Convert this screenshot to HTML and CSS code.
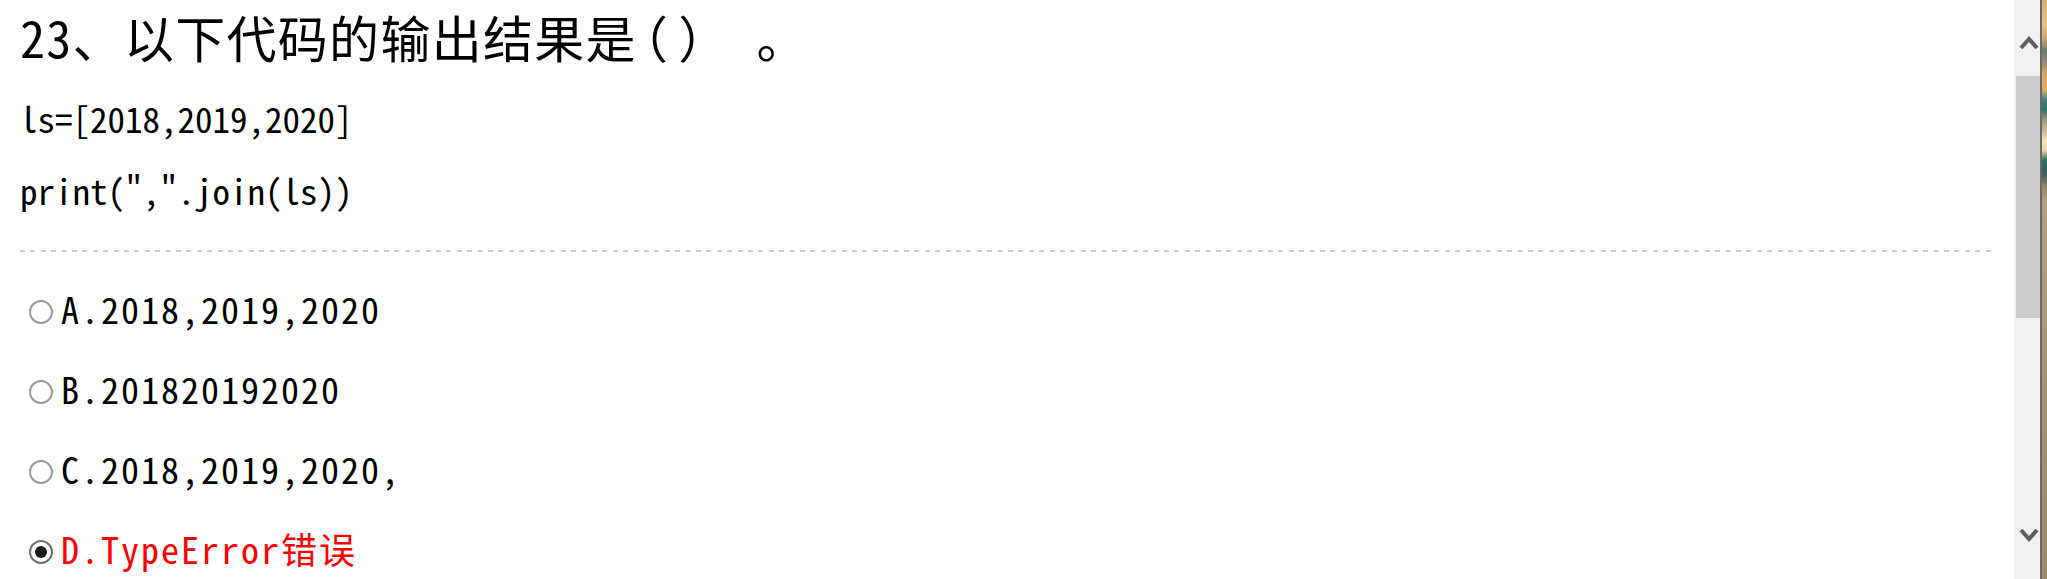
FILE: index.html
```html
<!DOCTYPE html>
<html lang="zh-CN">
<head>
<meta charset="utf-8">
<title>23、以下代码的输出结果是（）。</title>
<link rel="stylesheet" href="styles.css">
</head>
<body>
<div class="window">
  <main class="page">
    <h1 class="title">23、以下代码的输出结果是<span class="paren-open">（</span><span class="paren-close">）</span><span class="full-stop">。</span></h1>
    <div class="code">
      <p class="code-line">ls=[2018,2019,2020]</p>
      <p class="code-line">print(",".join(ls))</p>
    </div>
    <div class="sep"></div>
    <ul class="options">
      <li class="opt"><span class="radio"></span><span class="opt-text">A.2018,2019,2020</span></li>
      <li class="opt"><span class="radio"></span><span class="opt-text">B.201820192020</span></li>
      <li class="opt"><span class="radio"></span><span class="opt-text">C.2018,2019,2020,</span></li>
      <li class="opt opt-chosen"><span class="radio radio-on"></span><span class="opt-text">D.TypeError错误</span></li>
    </ul>
  </main>
  <div class="scrollbar">
    <svg class="sb-arrow sb-up" width="22" height="18" viewBox="0 0 22 18"><polyline points="3,15 11,6 19,15" fill="none" stroke="#5f5f5f" stroke-width="4"/></svg>
    <div class="sb-thumb"></div>
    <div class="sb-fill"></div>
    <svg class="sb-arrow sb-down" width="22" height="18" viewBox="0 0 22 18"><polyline points="3,3 11,12 19,3" fill="none" stroke="#5f5f5f" stroke-width="4"/></svg>
  </div>
  <div class="edge"></div>
  <div class="strip"></div>
</div>
</body>
</html>
```
FILE: styles.css
```css
html, body {
  margin: 0;
  padding: 0;
  background: #ffffff;
}

.window {
  display: flex;
  width: 2047px;
  height: 579px;
  overflow: hidden;
}

.page {
  flex: 1;
  padding: 11px 19px 0 20px;
  color: #000;
  font-family: "Noto Sans Mono CJK SC", "Noto Sans CJK SC", monospace;
  overflow: hidden;
}

.title {
  margin: 0;
  font-size: 50px;
  line-height: 50px;
  font-weight: normal;
  letter-spacing: 1.3px;
  white-space: nowrap;
}

.paren-open {
  margin-left: 6px;
  font-feature-settings: "halt" 1;
}

.paren-close {
  margin-left: 9px;
}

.full-stop {
  margin-left: 52px;
}

.code {
  margin-top: 21px;
}

.code-line {
  margin: 0;
  font-size: 35px;
  line-height: 72px;
  white-space: pre;
}

.sep {
  margin-top: 24px;
  height: 2px;
  background: repeating-linear-gradient(to right, #cccccc 0 5px, transparent 5px 10.4px);
}

.options {
  list-style: none;
  margin: 16px 0 0;
  padding: 0;
}

.opt {
  display: flex;
  align-items: center;
  height: 80px;
  font-size: 36px;
  letter-spacing: 2px;
}

.opt-chosen {
  color: #ff0000;
}

.radio {
  flex: none;
  display: grid;
  place-items: center;
  box-sizing: border-box;
  width: 24px;
  height: 24px;
  margin: 7px 8px 0 9px;
  border: 2px solid #9a9a9a;
  border-radius: 50%;
  background: #fff;
}

.radio-on {
  border-color: #707070;
}

.radio-on::after {
  content: "";
  width: 12px;
  height: 12px;
  border-radius: 50%;
  background: #1c1c1c;
}

.opt-text {
  white-space: pre;
}

.scrollbar {
  flex: none;
  width: 26px;
  display: flex;
  flex-direction: column;
  align-items: flex-end;
  background: #f0f0f0;
}

.sb-arrow {
  display: block;
  flex: none;
}

.sb-up {
  margin-top: 33px;
}

.sb-thumb {
  flex: none;
  width: 24px;
  height: 242px;
  margin-top: 25px;
  background: #cdcdcd;
}

.sb-fill {
  flex: 1;
}

.sb-down {
  margin-bottom: 34px;
}

.edge {
  flex: none;
  width: 2px;
  background: #6a6a6a;
}

.strip {
  flex: none;
  width: 5px;
  background: linear-gradient(to bottom,
    #d9b07a 0px, #e7c08a 25px, #c9a070 40px, #6f7f70 50px, #8a8a70 60px,
    #dba460 75px, #e2a865 90px, #3f7f80 100px, #2f7373 110px, #9a9a80 120px,
    #c6b590 130px, #f6e4b8 140px, #efd9a8 150px, #2f6f70 160px, #256566 168px,
    #4a5a55 175px, #8e8268 185px, #b0a080 200px, #9a8a70 579px);
}
```
